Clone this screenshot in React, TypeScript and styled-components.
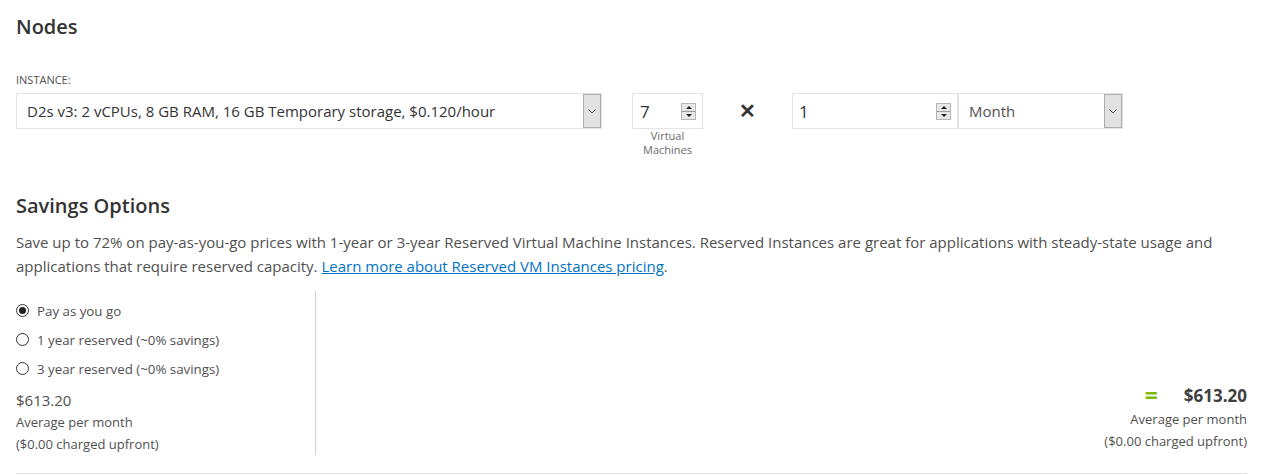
import React from "react";
import styled, { createGlobalStyle } from "styled-components";

const Global = createGlobalStyle`
  body {
    margin: 0;
    background: #fff;
    font-family: "Open Sans", "Noto Sans", sans-serif;
    color: #505050;
  }
`;

const Page = styled.div`
  width: 1231px;
  padding: 0 16px;
`;

const Heading = styled.h2`
  margin: 0;
  font-size: 20px;
  line-height: 28px;
  font-weight: 600;
  color: #333;
  padding-top: ${(p: { $top: number }) => p.$top}px;
`;

const FieldLabel = styled.div`
  margin-top: 32px;
  font-size: 11px;
  line-height: 14px;
  text-transform: uppercase;
  color: #505050;
`;

const ControlsRow = styled.div`
  display: flex;
  align-items: flex-start;
  margin-top: 6px;
`;

const Box = styled.div<{ $w: number }>`
  box-sizing: border-box;
  width: ${(p) => p.$w}px;
  height: 36px;
  border: 1px solid #e3e3e3;
  display: flex;
  align-items: center;
  background: #fff;
`;

const BoxText = styled.span<{ $size?: number; $color?: string; $pad?: number }>`
  flex: 1;
  padding-left: ${(p) => p.$pad ?? 10}px;
  font-size: ${(p) => p.$size ?? 15}px;
  color: ${(p) => p.$color ?? "#333"};
  white-space: nowrap;
`;

const DropButton = styled.div`
  box-sizing: border-box;
  width: 18px;
  height: 34px;
  background: #e1e1e1;
  border: 1px solid #adadad;
  display: flex;
  align-items: center;
  justify-content: center;
`;

const Spinner = styled.div`
  box-sizing: border-box;
  width: 15px;
  height: 17px;
  margin-right: 6px;
  background: #e8e8e8;
  border: 1px solid #b5b5b5;
  display: flex;
  flex-direction: column;
`;

const SpinHalf = styled.div<{ $down?: boolean }>`
  flex: 1;
  display: flex;
  align-items: center;
  justify-content: center;
  border-top: ${(p) => (p.$down ? "1px solid #9a9a9a" : "none")};
`;

const Tri = styled.div<{ $down?: boolean }>`
  width: 0;
  height: 0;
  border-left: 3px solid transparent;
  border-right: 3px solid transparent;
  ${(p) =>
    p.$down ? "border-top: 3px solid #222;" : "border-bottom: 3px solid #222;"}
`;

const QtyCol = styled.div`
  display: flex;
  flex-direction: column;
  align-items: center;
  margin-left: 30px;
`;

const QtyLabel = styled.div`
  margin-top: 0px;
  font-size: 11px;
  line-height: 14px;
  color: #6a6a6a;
  text-align: center;
`;

const Times = styled.div`
  width: 89px;
  height: 34px;
  display: flex;
  align-items: center;
  justify-content: center;
  font-size: 20px;
  font-weight: 700;
  color: #333;
`;

const Paragraph = styled.p`
  margin: 10px 0 0;
  font-size: 15px;
  line-height: 24px;
  color: #505050;
`;

const Link = styled.a`
  color: #0072c6;
  text-decoration: underline;
`;

const Bottom = styled.div`
  display: flex;
  margin-top: 13px;
  border-bottom: 1px solid #e3e3e3;
  padding-bottom: 18px;
`;

const LeftCol = styled.div`
  width: 299px;
  border-right: 1px solid #d0d0d0;
  padding-top: 5px;
`;

const RadioRow = styled.label`
  display: flex;
  align-items: center;
  gap: 8px;
  height: 29px;
  font-size: 13.3px;
  color: #505050;
`;

const RadioCircle = styled.span<{ $on?: boolean }>`
  box-sizing: border-box;
  width: 13px;
  height: 13px;
  border-radius: 50%;
  border: 1px solid #333;
  display: flex;
  align-items: center;
  justify-content: center;
  &::after {
    content: "";
    width: 7px;
    height: 7px;
    border-radius: 50%;
    background: ${(p) => (p.$on ? "#222" : "transparent")};
  }
`;

const Price = styled.div`
  margin-top: 6px;
  font-size: 15px;
  line-height: 22px;
  color: #505050;
`;

const SubLine = styled.div<{ $lh: number }>`
  font-size: 13px;
  line-height: ${(p) => p.$lh}px;
  color: #505050;
`;

const RightCol = styled.div`
  flex: 1;
  display: flex;
  flex-direction: column;
  align-items: flex-end;
  justify-content: flex-end;
  padding-bottom: 3px;
`;

const TotalRow = styled.div`
  display: flex;
  align-items: center;
  gap: 26px;
  height: 26px;
`;

const Equals = styled.span`
  font-size: 23px;
  font-weight: 700;
  color: #7fba00;
`;

const TotalPrice = styled.span`
  font-size: 17px;
  font-weight: 700;
  color: #404040;
`;

const Chevron = () => (
  <svg width="8" height="5" viewBox="0 0 8 5">
    <path d="M0.5 0.5 L4 4 L7.5 0.5" fill="none" stroke="#555" strokeWidth="1" />
  </svg>
);

const Spin = () => (
  <Spinner>
    <SpinHalf>
      <Tri />
    </SpinHalf>
    <SpinHalf $down>
      <Tri $down />
    </SpinHalf>
  </Spinner>
);

export default function App() {
  return (
    <>
      <Global />
      <Page>
        <Heading $top={13}>Nodes</Heading>
        <FieldLabel>Instance:</FieldLabel>
        <ControlsRow>
          <Box $w={586}>
            <BoxText>D2s v3: 2 vCPUs, 8 GB RAM, 16 GB Temporary storage, $0.120/hour</BoxText>
            <DropButton>
              <Chevron />
            </DropButton>
          </Box>
          <QtyCol>
            <Box $w={71}>
              <BoxText $size={17} $pad={7}>7</BoxText>
              <Spin />
            </Box>
            <QtyLabel>
              Virtual
              <br />
              Machines
            </QtyLabel>
          </QtyCol>
          <Times>✕</Times>
          <Box $w={166}>
            <BoxText $size={17} $pad={6}>1</BoxText>
            <Spin />
          </Box>
          <Box $w={165}>
            <BoxText $color="#505050">Month</BoxText>
            <DropButton>
              <Chevron />
            </DropButton>
          </Box>
        </ControlsRow>
        <Heading $top={35}>Savings Options</Heading>
        <Paragraph>
          Save up to 72% on pay-as-you-go prices with 1-year or 3-year Reserved Virtual Machine
          Instances. Reserved Instances are great for applications with steady-state usage and
          applications that require reserved capacity.{" "}
          <Link href="#">Learn more about Reserved VM Instances pricing</Link>.
        </Paragraph>
        <Bottom>
          <LeftCol>
            <RadioRow>
              <RadioCircle $on />
              Pay as you go
            </RadioRow>
            <RadioRow>
              <RadioCircle />1 year reserved (~0% savings)
            </RadioRow>
            <RadioRow>
              <RadioCircle />3 year reserved (~0% savings)
            </RadioRow>
            <Price>$613.20</Price>
            <SubLine $lh={22}>Average per month</SubLine>
            <SubLine $lh={22}>($0.00 charged upfront)</SubLine>
          </LeftCol>
          <RightCol>
            <TotalRow>
              <Equals>=</Equals>
              <TotalPrice>$613.20</TotalPrice>
            </TotalRow>
            <SubLine $lh={22}>Average per month</SubLine>
            <SubLine $lh={22}>($0.00 charged upfront)</SubLine>
          </RightCol>
        </Bottom>
      </Page>
    </>
  );
}
